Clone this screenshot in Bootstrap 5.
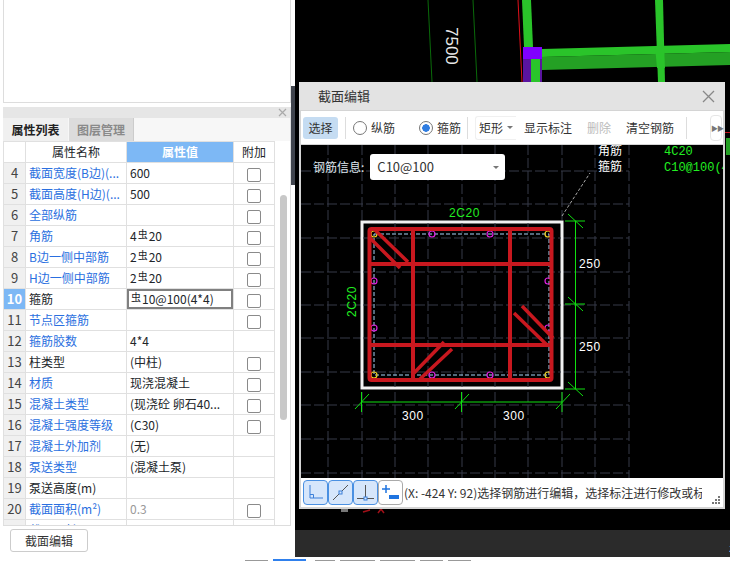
<!DOCTYPE html>
<html lang="zh-CN">
<head>
  <meta charset="UTF-8" />
  <meta name="viewport" content="width=device-width, initial-scale=1.0"/>
  <title>截面编辑</title>
  <link href="https://cdn.jsdelivr.net/npm/bootstrap@5.3.2/dist/css/bootstrap.min.css" rel="stylesheet" />
  <style>
    html, body { height: 561px; overflow: hidden; }
    body { font-family: "Noto Sans CJK SC", "Liberation Sans", sans-serif; font-size: 12px; line-height: 16px; color: #333; background: #fff; }
    .app-main { height: 557px; }
    .left-col { width: 291px; flex: none; background: #fff; }
    .top-box { height: 104px; margin: -1px 0 0 3px; border: 1px solid #ddd; background: #fff; }
    .prop-panel { height: 419px; margin: 4px 0 0 3px; border: solid #ddd; border-width: 0 1px 1px 0; overflow: hidden; }
    .panel-head { height: 11px; background: #e6e6e6; }
    .panel-x { width: 11px; height: 11px; margin-right: 2px; }
    .tab-row { height: 23px; background: #f7f7f7; }
    .prop-tab { width: 65px; border: 0; padding: 0; text-align: center; line-height: 22px; font-weight: 700; font-size: 12px; background: #f0f0f0; color: #222; }
    .prop-tab.off { background: #dcdcdc; color: #8a8a8a; margin-left: 1px; border-right: 1px solid #ccc; }
    .prop-table { width: 271px; table-layout: fixed; margin: 0; --bs-table-border-color: #e0e0e0; }
    .prop-table th, .prop-table td { height: 21px; padding: 0 3px; font-size: 12px; line-height: 16px; font-weight: 400; white-space: nowrap; overflow: hidden; vertical-align: middle; box-sizing: border-box; }
    .prop-table .num-cell { background: #f0f0f0; font-size: 13px; text-align: center; padding: 0; color: #444; }
    .prop-table thead .num-cell { background: #fff; }
    .prop-table .num-cell.sel { background: #7db8f5; color: #fff; font-weight: 700; }
    .prop-table .val-head { background: #7db8f5; color: #fff; font-weight: 700; text-align: center; }
    .prop-table .is-link { color: #2a6fe0; }
    .prop-table .is-dim { color: #999; }
    .prop-table .val-edit { box-shadow: inset 0 0 0 2px #808080; }
    .prop-table .form-check-input { width: 14px; height: 14px; margin: 3px 0 0; border-color: #8a8a8a; border-radius: 2px; float: none; display: block; margin-inline: auto; }
    .rebar-mark { font-size: 10px; position: relative; top: -3px; margin: 0 1px; }
    .scroll-track { width: 16px; flex: none; }
    .scroll-thumb { width: 7px; height: 225px; margin: 54px 0 0 5px; background: #c8c8c8; border-radius: 4px; }
    .edit-btn { width: 78px; height: 23px; margin: 3px 0 0 10px; padding: 0; font-size: 12px; line-height: 20px; border: 1px solid #ccc; border-radius: 3px; background: #fff; color: #333; }
    .splitter-col { width: 4px; flex: none; background: #fff; }
    .splitter-bar { height: 99px; margin-top: 86px; background: #40444d; }
    .cad-col { background: #000; }
    .cad-area { height: 530px; }
    .cad-bg { display: block; }
    .status-strip { height: 27px; background: #2b2b2b; color: #fff; font-size: 10px; line-height: 36px; text-align: right; overflow: hidden; }
    .status-strip span { margin-right: -4px; }
    .tab-strip { height: 4px; background: #fff; padding-left: 245px; gap: 5px; }
    .strip-tab { height: 1px; margin-top: 3px; background: #999; width: 23px; }
    .strip-tab.on { background: #2f80ed; width: 33px; height: 2px; margin-top: 2px; }
    .strip-tab.w2 { width: 20px; margin-left: 4px; }
    .strip-tab.w3 { width: 35px; }
    .sec-dialog { position: absolute; left: 4px; top: 82px; width: 426px; height: 427px; padding: 0 2px 2px; background: #d4d4d4; }
    .sec-title { height: 28px; margin: 0 -2px; padding: 0 10px 0 19px; background: #e3e3e3; font-size: 13px; color: #333; }
    .sec-toolbar { height: 33px; margin-top: 1px; background: #fff; font-size: 12px; color: #333; white-space: nowrap; }
    .tool-pick { width: 35px; height: 22px; margin-left: 2px; padding: 0; border: 0; border-radius: 3px; background: #c5dcf2; font-size: 12px; line-height: 22px; color: #333; }
    .tool-sep { width: 1px; height: 22px; background: #ddd; }
    .tool-sep-a { margin-left: 7px; }
    .tool-sep-b { margin-left: 6px; }
    .tool-sep-c { margin-left: 12px; }
    .tool-radio { display: flex; align-items: center; margin: 0; padding: 0; min-height: 0; }
    .tool-radio-a { margin-left: 7px; }
    .tool-radio-b { margin-left: 24px; }
    .tool-radio .form-check-input { float: none; width: 14px; height: 14px; margin: 0 4px 0 0; border-color: #777; }
    .tool-radio .form-check-input:checked { background-color: #fff; border-color: #777; --bs-form-check-bg-image: none; background-image: radial-gradient(circle, #2f7de1 0 3.5px, #fff 4px); }
    .tool-text { margin-left: 15px; padding: 0; border: 0; background: none; font-size: 12px; color: #333; line-height: 16px; }
    .tool-text.is-first { margin-left: 8px; }
    .tool-text.is-off { color: #bbb; }
    .shape-pick { width: 41px; height: 24px; margin-left: 7px; padding: 0 3px; border: 1px solid #f0f0f0; border-right: 0; border-radius: 3px 0 0 3px; background: #fff; font-size: 12px; line-height: 22px; color: #333; }
    .shape-pick::after, .info-pick::after { border-top-color: #777; border-width: 3px 3px 0; margin: 0; }
    .more-btn { width: 12px; height: 26px; margin: 0 1px 0 auto; padding: 0; border: 1px solid #e6e6e6; border-radius: 4px; background: #fff; font-size: 7px; line-height: 24px; color: #777; letter-spacing: -1px; }
    .sec-canvas { height: 333px; margin-top: 1px; background: #000; }
    .sec-draw { position: absolute; left: 0; top: 0; }
    .sec-info { position: relative; padding: 9px 0 0 12px; color: #dfe6ee; font-size: 12px; line-height: 26px; }
    .info-pick { width: 135px; height: 26px; margin-left: 6px; padding: 0 6px 0 7px; border: 0; border-radius: 3px; background: #fff; color: #333; font-size: 13px; line-height: 26px; text-align: left; }
    .sec-status { height: 29px; background: #fff; padding-left: 2px; font-size: 12px; color: #333; white-space: nowrap; overflow: hidden; }
    .snap-btn { width: 25px; height: 25px; padding: 0; border: 1px solid #4a90e2; border-radius: 4px; background: #d6e6fb; line-height: 0; }
    .snap-btn svg { display: block; margin: auto; }
    .snap-btn.plain { border-color: #aaa; background: #fff; }
    .status-msg { width: 298px; overflow: hidden; margin-left: 1px; }
    .status-grip { position: absolute; right: 4px; bottom: 4px; }
    svg text { font-family: "Liberation Sans", sans-serif; }
    svg .cad-mono { font-family: "Liberation Mono", "Noto Sans CJK SC", monospace; }
    svg .dim-text { letter-spacing: .6px; }
  </style>
</head>
<body>
  <div class="app-main d-flex">
    <!-- 左侧属性面板 -->
    <div class="left-col d-flex flex-column">
      <div class="top-box"></div>
      <div class="prop-panel">
        <div class="panel-head d-flex justify-content-end align-items-center">
          <svg class="panel-x" viewBox="0 0 11 11"><path d="M2 2 9 9M9 2 2 9" stroke="#aaa" stroke-width="1.2"/></svg>
        </div>
        <div class="tab-row d-flex">
          <button class="prop-tab" type="button">属性列表</button>
          <button class="prop-tab off" type="button">图层管理</button>
        </div>
        <div class="d-flex">
          <table class="table table-bordered prop-table">
            <colgroup><col style="width:22px"><col style="width:101px"><col style="width:107px"><col style="width:41px"></colgroup>
            <thead>
              <tr>
                <th class="num-cell"></th>
                <th class="text-center">属性名称</th>
                <th class="val-head">属性值</th>
                <th class="text-center">附加</th>
              </tr>
            </thead>
            <tbody id="propRows"></tbody>
          </table>
          <div class="scroll-track"><div class="scroll-thumb"></div></div>
        </div>
      </div>
      <button class="edit-btn" type="button">截面编辑</button>
    </div>
    <div class="splitter-col"><div class="splitter-bar"></div></div>

    <!-- 右侧绘图区 -->
    <div class="cad-col flex-grow-1">
      <div class="cad-area position-relative">
        <svg class="cad-bg" width="435" height="530" viewBox="295 0 435 530">
          <path d="M428 0 432 82M473 0 477 82" stroke="#0a6a0a" stroke-width="1" fill="none"/>
          <path d="M518 0 522 82" stroke="#e0101a" stroke-width="1" fill="none"/>
          <polygon points="522,0 531,0 533,47 524,47" fill="#2ac42a"/>
          <polygon points="655,0 663,0 665,82 658,82" fill="#2ac42a"/>
          <polygon points="542,57 730,52 730,65 542,70" fill="#24a024"/>
          <polygon points="542,49 730,44 730,52 542,57" fill="#2ac42a"/>
          <polygon points="655,46 664,46 665,68 657,68" fill="#2ac42a"/>
          <rect x="523" y="47" width="19" height="35" fill="#5a14a0"/>
          <rect x="523" y="47" width="19" height="12" fill="#8000ff"/>
          <rect x="531" y="59" width="9" height="23" fill="#2ac42a"/>
          <text x="0" y="0" transform="translate(446 27) rotate(90)" font-size="17" fill="#e8e8e8">7500</text>
          <rect x="341" y="509" width="7" height="3" fill="#777"/>
          <path d="M363 512 370 510M378 513 381 509 384 513" stroke="#a01018" stroke-width="1.5" fill="none"/>
          <path d="M725 132.500H730" stroke="#c0101a" stroke-width="1"/>
          <rect x="726" y="138" width="4" height="17" fill="#24a024"/>
        </svg>

        <div class="sec-dialog">
          <div class="sec-title d-flex align-items-center justify-content-between">
            <span>截面编辑</span>
            <svg width="13" height="13" viewBox="0 0 13 13"><path d="M1 1 12 12M12 1 1 12" stroke="#888" stroke-width="1.3"/></svg>
          </div>
          <div class="sec-toolbar d-flex align-items-center">
            <button class="tool-pick" type="button">选择</button>
            <span class="tool-sep tool-sep-a"></span>
            <label class="form-check tool-radio tool-radio-a"><input class="form-check-input" type="radio" name="barKind">纵筋</label>
            <label class="form-check tool-radio tool-radio-b"><input class="form-check-input" type="radio" name="barKind" checked>箍筋</label>
            <span class="tool-sep tool-sep-b"></span>
            <button class="shape-pick dropdown-toggle d-flex justify-content-between align-items-center" type="button">矩形</button>
            <button class="tool-text is-first" type="button">显示标注</button>
            <button class="tool-text is-off" type="button">删除</button>
            <button class="tool-text" type="button">清空钢筋</button>
            <span class="tool-sep tool-sep-c"></span>
            <button class="more-btn" type="button">▶▶</button>
          </div>
          <div class="sec-canvas position-relative">
            <svg class="sec-draw" width="422" height="333" viewBox="301 144 422 333">
              <!-- 网格 -->
              <path d="M328 144V477M362 144V477M395 144V477M428 144V477M462 144V477M495 144V477M528 144V477M562 144V477M595 144V477M629 144V477M301 170H629M301 203H629M301 237H629M301 271H629M301 304H629M301 337H629M301 371H629M301 404H629M301 438H629M301 472H629" stroke="#363b49" stroke-width="1" stroke-dasharray="10 3" fill="none"/>
              <path d="M562 215 590 172" stroke="#aaa" stroke-width="1" stroke-dasharray="3 2" fill="none"/>
              <text class="cad-mono" x="598" y="154" font-size="12" fill="#fff">角筋</text>
              <text class="cad-mono" x="598" y="170" font-size="12" fill="#fff">箍筋</text>
              <text class="cad-mono" x="664" y="154" font-size="12" fill="#22ee22">4C20</text>
              <text class="cad-mono" x="664" y="170" font-size="12" fill="#22ee22">C10@100(4*4)</text>
              <!-- 截面 -->
              <rect x="362" y="221" width="200" height="166" fill="#000" stroke="#f2f2f2" stroke-width="3"/>
              <path d="M395 222V386M428 222V386M462 222V386M495 222V386M528 222V386M363 237H561M363 271H561M363 304H561M363 337H561M363 371H561" stroke="#363b49" stroke-width="1" stroke-dasharray="10 3" fill="none"/>
              <rect x="374" y="233" width="175" height="141" fill="none" stroke="#a9d2f5" stroke-width="1" stroke-dasharray="4 2"/>
              <g fill="none" stroke="#e020e0" stroke-width="1.2">
                <circle cx="432" cy="233" r="3"/><circle cx="490" cy="233" r="3"/>
                <circle cx="374" cy="280" r="3"/><circle cx="548" cy="280" r="3"/>
                <circle cx="374" cy="327" r="3"/><circle cx="548" cy="327" r="3"/>
                <circle cx="432" cy="374" r="3"/><circle cx="490" cy="374" r="3"/>
              </g>
              <g fill="none" stroke="#f0d020" stroke-width="1.2">
                <circle cx="374" cy="233" r="3"/><circle cx="548" cy="233" r="3"/>
                <circle cx="374" cy="374" r="3"/><circle cx="548" cy="374" r="3"/>
              </g>
              <g fill="none" stroke="#c8181f" stroke-width="4">
                <rect x="369.500" y="228" width="182" height="151" rx="2"/>
                <path d="M413 228V379M510 228V379M369 263H552M369 344H552"/>
              </g>
              <g fill="none" stroke="#c8181f" stroke-width="3.500">
                <path d="M375 229 408 261M369 236 400 267"/>
                <path d="M522 305 553 337M514 312 548 345"/>
                <path d="M444 341 414 372M452 348 420 378"/>
              </g>
              <!-- 标注 -->
              <g stroke="#10e010" stroke-width="1" fill="none">
                <path d="M575.500 220V388M565 220H585M565 303H585M565 388H585"/>
                <path d="M568 213 583 227M568 296 583 310M568 381 583 395"/>
                <path d="M361 401H562M361.500 391V411M461.500 391V411M562 391V411"/>
                <path d="M355 408 369 393M455 408 469 393M556 408 570 393"/>
              </g>
              <text class="dim-text" x="449" y="216" font-size="12" fill="#22ee22">2C20</text>
              <text class="dim-text" transform="translate(356 316) rotate(-90)" font-size="12" fill="#22ee22">2C20</text>
              <text class="dim-text" x="579" y="267" font-size="12" fill="#fff">250</text>
              <text class="dim-text" x="579" y="350" font-size="12" fill="#fff">250</text>
              <text class="dim-text" x="402" y="419" font-size="12" fill="#fff">300</text>
              <text class="dim-text" x="503" y="419" font-size="12" fill="#fff">300</text>
            </svg>
            <div class="sec-info d-flex">
              <span>钢筋信息:</span>
              <button class="info-pick dropdown-toggle d-flex justify-content-between align-items-center" type="button">C10@100</button>
            </div>
          </div>
          <div class="sec-status d-flex align-items-center">
            <button class="snap-btn" type="button"><svg width="23" height="23" viewBox="0 0 23 23"><path d="M6 4V17H19M6 13.500H9.500V17" fill="none" stroke="#3b7fd9" stroke-width="1"/></svg></button>
            <button class="snap-btn" type="button"><svg width="23" height="23" viewBox="0 0 23 23"><path d="M4 19 19 4" stroke="#555" stroke-width="1"/><rect x="10" y="10" width="3" height="3" fill="#d6e6fb" stroke="#3b7fd9" stroke-width="1"/></svg></button>
            <button class="snap-btn" type="button"><svg width="23" height="23" viewBox="0 0 23 23"><path d="M11.500 4V17M3 17.500H20" stroke="#555" stroke-width="1"/><rect x="10" y="16" width="3" height="3" fill="#d6e6fb" stroke="#3b7fd9" stroke-width="1"/></svg></button>
            <button class="snap-btn plain" type="button"><svg width="23" height="23" viewBox="0 0 23 23"><path d="M3 8H11M7 4V12" stroke="#1f74e0" stroke-width="1.500"/><rect x="10" y="14" width="10" height="4" fill="#1f74e0"/></svg></button>
            <div class="status-msg">(X: -424 Y: 92)选择钢筋进行编辑，选择标注进行修改或标注</div>
          </div>
          <svg class="status-grip" width="9" height="9" viewBox="0 0 9 9" fill="#777"><rect x="6" y="0" width="2" height="2"/><rect x="3" y="3" width="2" height="2"/><rect x="6" y="3" width="2" height="2"/><rect x="0" y="6" width="2" height="2"/><rect x="3" y="6" width="2" height="2"/><rect x="6" y="6" width="2" height="2"/></svg>
        </div>
      </div>
      <div class="status-strip"><span>z</span></div>
    </div>
  </div>
  <div class="tab-strip d-flex">
    <span class="strip-tab"></span>
    <span class="strip-tab on"></span>
    <span class="strip-tab w2"></span>
    <span class="strip-tab w3"></span>
    <span class="strip-tab w3"></span>
    <span class="strip-tab"></span>
    <span class="strip-tab"></span>
  </div>

  <script src="https://cdn.jsdelivr.net/npm/bootstrap@5.3.2/dist/js/bootstrap.bundle.min.js"></script>
  <script>
    // 序号, 名称, 属性值, 名称蓝色, 有附加框
    const mark = '<span class="rebar-mark">虫</span>';
    const rows = [
      [4, '截面宽度(B边)(...', '600', 1, 1],
      [5, '截面高度(H边)(...', '500', 1, 1],
      [6, '全部纵筋', '', 1, 1],
      [7, '角筋', '4' + mark + '20', 1, 1],
      [8, 'B边一侧中部筋', '2' + mark + '20', 1, 1],
      [9, 'H边一侧中部筋', '2' + mark + '20', 1, 1],
      [10, '箍筋', mark + '10@100(4*4)', 0, 1],
      [11, '节点区箍筋', '', 1, 1],
      [12, '箍筋胶数', '4*4', 1, 0],
      [13, '柱类型', '(中柱)', 0, 1],
      [14, '材质', '现浇混凝土', 1, 1],
      [15, '混凝土类型', '(现浇砼 卵石40...', 1, 1],
      [16, '混凝土强度等级', '(C30)', 1, 1],
      [17, '混凝土外加剂', '(无)', 1, 0],
      [18, '泵送类型', '(混凝土泵)', 1, 0],
      [19, '泵送高度(m)', '', 0, 0],
      [20, '截面面积(m²)', '0.3', 1, 1],
      [21, '截面周长(m)', '2.2', 1, 1]
    ];

    document.getElementById('propRows').innerHTML = rows.map(r => {
      const sel = r[0] === 10;
      let valClass = sel ? 'val-edit' : '';
      if (r[0] === 20 || r[0] === 21) valClass = 'is-dim';
      return `
        <tr>
          <td class="num-cell ${sel ? 'sel' : ''}">${r[0]}</td>
          <td class="${r[3] ? 'is-link' : ''}">${r[1]}</td>
          <td class="${valClass}">${r[2]}</td>
          <td>${r[4] ? '<input class="form-check-input" type="checkbox">' : ''}</td>
        </tr>`;
    }).join('');
  </script>
</body>
</html>
